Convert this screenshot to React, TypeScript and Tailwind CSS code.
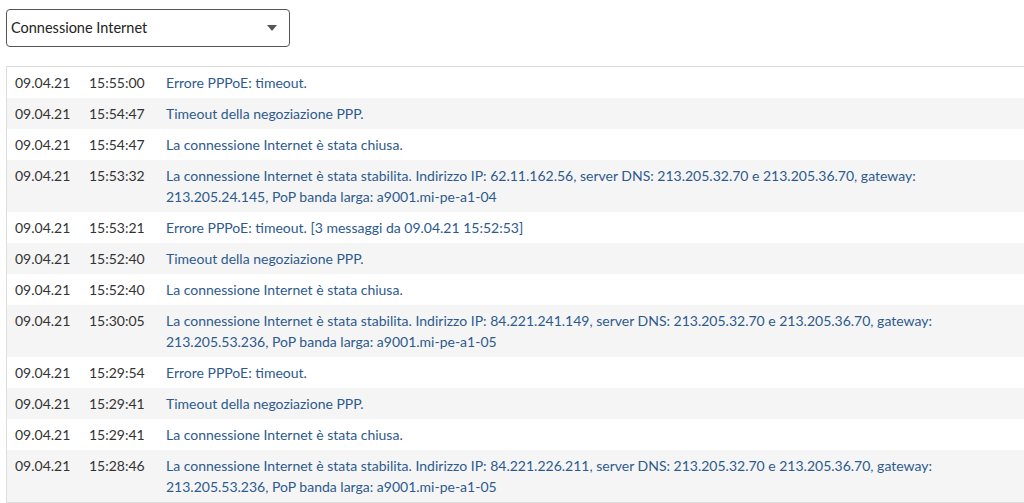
const rows = [
  { date: '09.04.21', time: '15:55:00', msg: 'Errore PPPoE: timeout.' },
  { date: '09.04.21', time: '15:54:47', msg: 'Timeout della negoziazione PPP.' },
  { date: '09.04.21', time: '15:54:47', msg: 'La connessione Internet è stata chiusa.' },
  {
    date: '09.04.21',
    time: '15:53:32',
    msg: 'La connessione Internet è stata stabilita. Indirizzo IP: 62.11.162.56, server DNS: 213.205.32.70 e 213.205.36.70, gateway: 213.205.24.145, PoP banda larga: a9001.mi-pe-a1-04',
  },
  { date: '09.04.21', time: '15:53:21', msg: 'Errore PPPoE: timeout. [3 messaggi da 09.04.21 15:52:53]' },
  { date: '09.04.21', time: '15:52:40', msg: 'Timeout della negoziazione PPP.' },
  { date: '09.04.21', time: '15:52:40', msg: 'La connessione Internet è stata chiusa.' },
  {
    date: '09.04.21',
    time: '15:30:05',
    msg: 'La connessione Internet è stata stabilita. Indirizzo IP: 84.221.241.149, server DNS: 213.205.32.70 e 213.205.36.70, gateway: 213.205.53.236, PoP banda larga: a9001.mi-pe-a1-05',
  },
  { date: '09.04.21', time: '15:29:54', msg: 'Errore PPPoE: timeout.' },
  { date: '09.04.21', time: '15:29:41', msg: 'Timeout della negoziazione PPP.' },
  { date: '09.04.21', time: '15:29:41', msg: 'La connessione Internet è stata chiusa.' },
  {
    date: '09.04.21',
    time: '15:28:46',
    msg: 'La connessione Internet è stata stabilita. Indirizzo IP: 84.221.226.211, server DNS: 213.205.32.70 e 213.205.36.70, gateway: 213.205.53.236, PoP banda larga: a9001.mi-pe-a1-05',
  },
]

export default function App() {
  return (
    <div
      className="w-[1024px] h-[503px] overflow-hidden bg-white text-[14px] text-[#333]"
      style={{ fontFamily: 'Lato, "Open Sans", sans-serif' }}
    >
      {/* Log filter */}
      <div className="pt-[9px] pl-[6px]">
        <div className="flex items-center justify-between w-[284px] h-[38px] border border-[#555] rounded-[4px] pl-[4px] pr-[12px]">
          <span className="text-[14.5px] text-[#222]">Connessione Internet</span>
          <svg width="10" height="6" viewBox="0 0 10 6" className="fill-[#555]">
            <path d="M0 0h10L5 6z" />
          </svg>
        </div>
      </div>

      {/* Event list */}
      <div className="mt-[19px] ml-[6px] w-[1040px] border-t border-l border-b border-[#ddd]">
        {rows.map((r, i) => (
          <div
            key={i}
            className={`flex py-[5px] leading-[21px] ${i % 2 === 1 ? 'bg-[#f5f5f5]' : 'bg-white'}`}
          >
            <div className="w-[82px] shrink-0 pl-[8px]">{r.date}</div>
            <div className="w-[77px] shrink-0">{r.time}</div>
            <div className="w-[770px] text-[#2d5a8e]">{r.msg}</div>
          </div>
        ))}
      </div>
    </div>
  )
}
